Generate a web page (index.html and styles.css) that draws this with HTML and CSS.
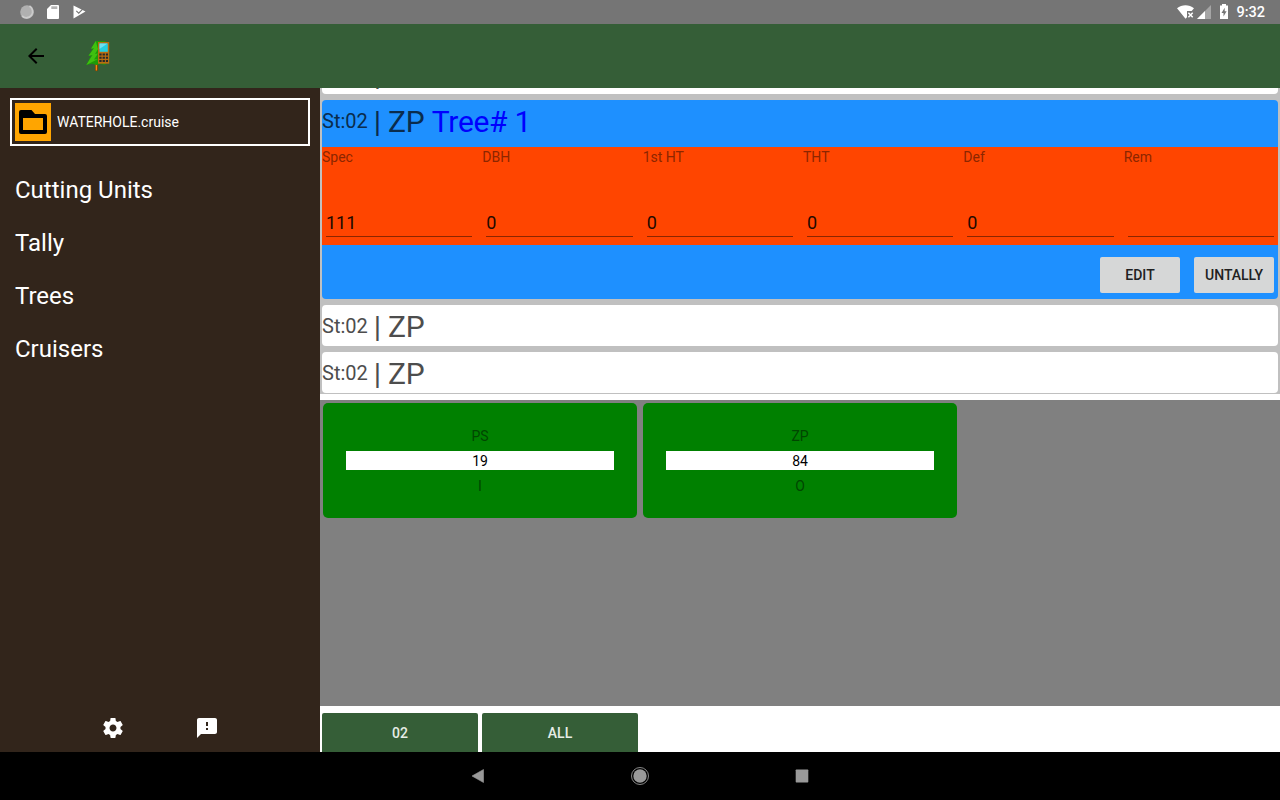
FILE: index.html
```html
<!DOCTYPE html>
<html lang="en">
<head>
<meta charset="utf-8">
<title>Tally</title>
<link rel="stylesheet" href="styles.css">
</head>
<body>
<header class="status">
  <div class="status-left">
    <svg width="16" height="16" viewBox="0 0 16 16"><circle cx="8" cy="8" r="6.800" fill="#b0b0b0"/><path d="M10.500 2A6.300 6.300 0 1 1 3 12" fill="none" stroke="#ccc" stroke-width="1.800"/></svg>
    <svg class="sd" width="12" height="14" viewBox="0 0 12 14"><path d="M4 0h7q1 0 1 1v12q0 1-1 1H1q-1 0-1-1V4z" fill="#fff"/><path d="M4.300 1.300h6v2.700h-6z" fill="#b5b5b5"/></svg>
    <svg class="play" width="13" height="14" viewBox="0 0 13 14"><path d="M.5.4 12.500 6.500.5 13.600z" fill="#fff"/><path d="M3.300 5.800 5.700 8.200 10.400 3.300" fill="none" stroke="#757575" stroke-width="1.100"/><path d="m9.800 3 2-1.300" stroke="#757575"/></svg>
  </div>
  <div class="status-right">
    <svg width="18" height="14" viewBox="0 0 18 14"><path d="M0 3.200C4.800-.9 12.200-.9 17 3.200L14.700 6H10v6.200l-1.500 1.600z" fill="#fff"/><path d="m11.400 7.800 4.300 4.400m0-4.400-4.300 4.400" stroke="#fff" stroke-width="1.500"/></svg>
    <svg class="cell" width="14" height="14" viewBox="0 0 14 14"><path d="M14 0v14H0z" fill="#a5a5a5"/><path d="M8 6v8H0z" fill="#fff"/></svg>
    <svg class="batt" width="8" height="15" viewBox="0 0 8 15"><path d="M2 0h4v1.500h2V15H0V1.500h2z" fill="#fff"/><path d="M4.700 3.700 1.500 9h2v3.500L6.600 7.300H4.700z" fill="#757575"/></svg>
    <span class="clock">9:32</span>
  </div>
</header>
<div class="appbar">
  <svg class="back" width="24" height="24" viewBox="0 0 24 24"><path d="M20 11H7.830l5.590-5.590L12 4l-8 8 8 8 1.410-1.410L7.830 13H20z"/></svg>
  <svg class="logo" width="26" height="32" viewBox="0 0 26 32">
    <path d="M9 22h3v8.500l-1.500.8-1.500-.8z" fill="#7a3d00"/><path d="M9.700 23h1.400v7.500H9.700z" fill="#f08a10"/>
    <path d="M9.700 1 5 8.500h2L2.500 15.500H5L.3 25l6-1.300 4.200 1.300 4-1 5 1V1z" fill="#1d9a08"/>
    <path d="M9.700 1 5 8.700l3-.5L2.500 15.700l4-.8L.3 25 12 19l-4 .5 4-6-3 .5 3-5z" fill="#3fc010"/>
    <path d="M12 2h11.200v21.700H12z" fill="#b96d10"/>
    <path d="M13.500 3.500H21.800v8.300H13.500z" fill="#25cfe0"/><path d="m13.500 9 8-5.500h-8z" fill="#70dff0"/>
    <path d="M13.300 13.600h2.300v2h-2.300zM16.600 13.600h2.300v2h-2.300zM19.900 13.600h2.100v2h-2.100zM13.300 16.700h2.300v2h-2.300zM16.600 16.700h2.300v2h-2.300zM19.900 16.700h2.100v2h-2.100zM13.300 19.900h2.300v2h-2.300zM16.600 19.900h2.300v2h-2.300zM19.900 19.900h2.100v2h-2.100z" fill="#252b2b"/>
  </svg>
</div>
<main class="body">
  <aside class="drawer">
    <div class="file">
      <span class="folder"><svg width="28" height="24" viewBox="0 0 28 24"><path fill-rule="evenodd" d="M2 0h10.500l3.500 4h10q2 0 2 2v16q0 2-2 2H2q-2 0-2-2V2q0-2 2-2zM4 8v12h20V8z"/></svg></span>
      <span>WATERHOLE.cruise</span>
    </div>
    <nav class="menu"><a>Cutting Units</a><a>Tally</a><a>Trees</a><a>Cruisers</a></nav>
    <div class="tools">
      <svg width="24" height="24" viewBox="0 0 24 24"><path fill="#fff" d="M19.430 12.980c.04-.32.070-.64.070-.98s-.03-.66-.07-.98l2.110-1.650c.19-.15.240-.42.120-.64l-2-3.460c-.12-.22-.39-.3-.61-.22l-2.490 1c-.52-.4-1.080-.73-1.690-.98l-.38-2.650C14.460 2.180 14.250 2 14 2h-4c-.25 0-.46.180-.49.420l-.38 2.650c-.61.250-1.170.590-1.690.980l-2.490-1c-.23-.09-.49 0-.61.220l-2 3.460c-.13.220-.07.490.12.640l2.110 1.650c-.04.320-.07.650-.07.980s.03.660.070.980l-2.110 1.650c-.19.150-.24.420-.12.640l2 3.460c.12.220.39.300.61.220l2.490-1c.52.400 1.080.730 1.690.980l.38 2.650c.03.240.24.420.49.420h4c.25 0 .46-.18.490-.42l.38-2.650c.61-.25 1.170-.59 1.690-.98l2.490 1c.23.090.49 0 .61-.22l2-3.460c.12-.22.070-.49-.12-.64l-2.110-1.650zM12 15.500c-1.930 0-3.500-1.570-3.500-3.500s1.570-3.500 3.500-3.500 3.500 1.570 3.500 3.500-1.570 3.500-3.500 3.500z"/></svg>
      <svg width="24" height="24" viewBox="0 0 24 24"><path fill="#fff" d="M20 2H4c-1.100 0-1.990.9-1.990 2L2 22l4-4h14c1.100 0 2-.9 2-2V4c0-1.100-.9-2-2-2zm-7 12h-2v-2h2v2zm0-4h-2V6h2v4z"/></svg>
    </div>
  </aside>
  <section class="content">
    <div class="list">
      <div class="card plot first"><small>St:02</small> | ZP</div>
      <div class="card selected">
        <div class="plot"><small>St:02</small> | ZP <b>Tree# 1</b></div>
        <div class="fields">
          <div class="field"><label>Spec</label><span>111</span></div>
          <div class="field"><label>DBH</label><span>0</span></div>
          <div class="field"><label>1st HT</label><span>0</span></div>
          <div class="field"><label>THT</label><span>0</span></div>
          <div class="field"><label>Def</label><span>0</span></div>
          <div class="field"><label>Rem</label><span></span></div>
        </div>
        <div class="actions"><button>EDIT</button><button>UNTALLY</button></div>
      </div>
      <div class="card plot"><small>St:02</small> | ZP</div>
      <div class="card plot"><small>St:02</small> | ZP</div>
    </div>
    <div class="tallies">
      <div class="tally"><span>PS</span><strong>19</strong><span>I</span></div>
      <div class="tally"><span>ZP</span><strong>84</strong><span>O</span></div>
    </div>
    <div class="strata"><button>02</button><button>ALL</button></div>
  </section>
</main>
<footer class="navbar">
  <svg width="20" height="20" viewBox="0 0 20 20"><path d="M4 10 15.500 3.500v13z" fill="#999" stroke="#999" stroke-width=".6"/></svg>
  <svg width="20" height="20" viewBox="0 0 20 20"><circle cx="10" cy="10" r="8.500" fill="none" stroke="#aaa" stroke-width=".8"/><circle cx="10" cy="10" r="6.700" fill="#999"/></svg>
  <svg width="20" height="20" viewBox="0 0 20 20"><rect x="3.700" y="3.600" width="12.600" height="12.800" rx=".7" fill="#999"/></svg>
</footer>
</body>
</html>
```
FILE: styles.css
```css
* { box-sizing: border-box; }
body {
  margin: 0; width: 1280px; height: 800px; overflow: hidden;
  display: flex; flex-direction: column;
  font-family: Roboto, sans-serif; font-size: 14px;
}
svg { display: block; flex: none; }
button { border: 0; margin: 0; padding: 0; font: 500 14px Roboto, sans-serif; border-radius: 2px; }

.status {
  height: 24px; flex: none; background: #757575; color: #fff;
  display: flex; justify-content: space-between; align-items: center; padding: 0 15px 0 19px;
}
.status-left, .status-right { display: flex; align-items: center; }
.sd { margin-left: 12px; }
.play { margin-left: 14px; }
.cell { margin-left: 2px; }
.batt { margin: -2px 8px 0 9px; }
.clock { font-weight: 500; font-size: 14.500px; line-height: 22px; padding-top: 2px; }

.appbar { height: 64px; flex: none; background: #355e37; display: flex; align-items: center; padding-left: 24px; }
.logo { margin-left: 38px; }

.body { height: 664px; flex: none; display: flex; }
.drawer { width: 320px; background: #32251b; color: #fff; padding: 10px 10px 12px; display: flex; flex-direction: column; }
.file { height: 48px; border: 2px solid #fff; padding: 3px; display: flex; align-items: center; gap: 6px; }
.folder { width: 36px; height: 38px; background: orange; display: flex; align-items: center; justify-content: center; }
.menu { padding: 30px 5px 0; display: flex; flex-direction: column; gap: 25px; font-size: 24px; line-height: 28px; }
.tools { margin-top: auto; padding-left: 91px; display: flex; gap: 70px; }

.content { width: 960px; background: #fff; display: flex; flex-direction: column; }
.list { height: 305.670px; margin-bottom: 6.330px; overflow: hidden; background: #c0c0c0; padding: 0 2px; display: flex; flex-direction: column; gap: 6px; }
.card { height: 41px; flex: none; border-radius: 4px; background: #fff; overflow: hidden; }
.first { margin-top: -35px; }
.plot { font-size: 30px; line-height: 43px; letter-spacing: -0.2px; color: #4d4d4d; white-space: pre; }
.plot small { font-size: 20px; line-height: 20px; vertical-align: 4px; letter-spacing: 0; margin-right: -1.300px; }
.plot b { font-weight: 400; color: #00f; letter-spacing: -0.3px; }
.selected { height: 199px; background: #1e90ff; }
.selected .plot { height: 47px; color: #0a2c4d; }
.fields { height: 98px; background: #ff4500; display: grid; grid-template-columns: repeat(6, 1fr); column-gap: 6px; }
.field { display: flex; flex-direction: column; justify-content: space-between; padding: 2px 0 8px; }
.field label { line-height: 16px; color: #8c2600; }
.field span { height: 26px; margin: 0 4px; line-height: 24px; font-size: 18px; color: #210900; border-bottom: 1px solid #8c2600; }
.actions { padding: 12px 4px 0; display: flex; justify-content: flex-end; gap: 14px; }
.actions button { width: 80px; height: 36px; background: #d6d7d7; color: #212121; }

.tallies { height: 306px; background: gray; padding: 3px; display: flex; gap: 6px; }
.tally { width: 314px; height: 115px; background: green; border-radius: 5px; padding: 25px 23px 0; display: flex; flex-direction: column; gap: 7px; text-align: center; line-height: 16px; color: #004600; }
.tally strong { height: 19px; line-height: 20px; background: #fff; color: #000; font-weight: 400; }
.tally strong + span { margin-top: 1px; }
.strata { height: 46px; padding: 7px 2px 0; display: flex; gap: 4px; }
.strata button { width: 156px; height: 39px; padding-top: 2px; background: #355e37; color: #e6ece6; border-radius: 2px 2px 0 0; }
.navbar { height: 48px; background: #000; display: flex; align-items: center; justify-content: center; gap: 142px; }
```
